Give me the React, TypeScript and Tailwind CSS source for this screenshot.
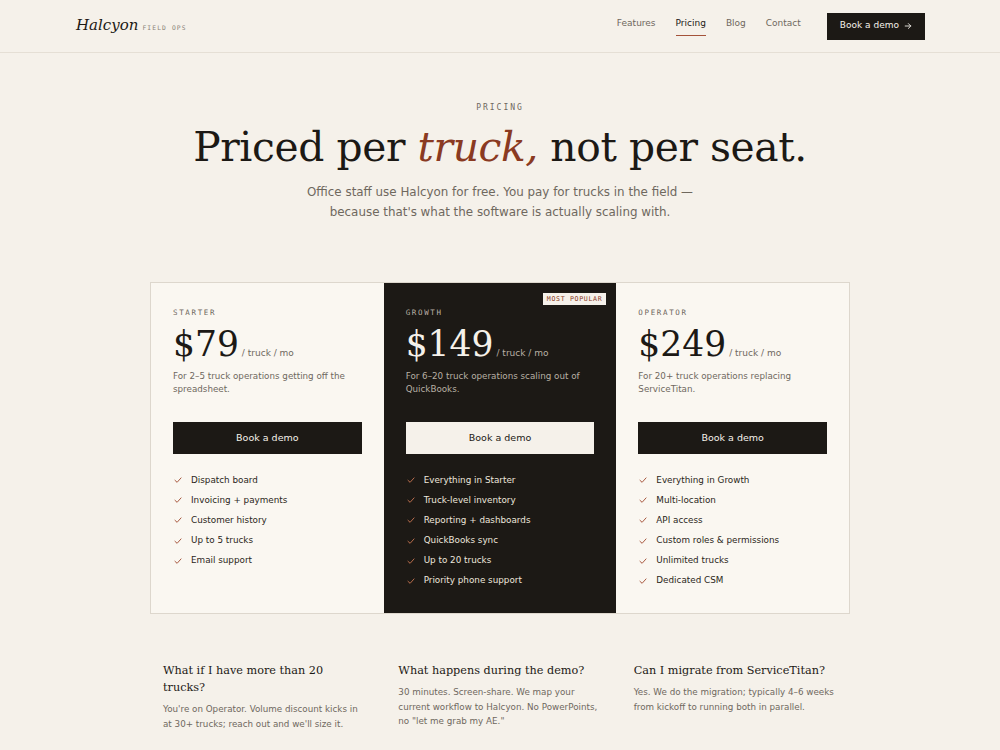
import React from 'react';

const serif = { fontFamily: '"DejaVu Serif", "Liberation Serif", serif' };
const mono = { fontFamily: '"DejaVu Sans Mono", "Liberation Mono", monospace' };
const sans = { fontFamily: '"DejaVu Sans", "Liberation Sans", sans-serif' };

type Plan = {
  name: string;
  price: string;
  blurb: string;
  features: string[];
  featured?: boolean;
};

const plans: Plan[] = [
  {
    name: 'STARTER',
    price: '$79',
    blurb: 'For 2–5 truck operations getting off the spreadsheet.',
    features: ['Dispatch board', 'Invoicing + payments', 'Customer history', 'Up to 5 trucks', 'Email support'],
  },
  {
    name: 'GROWTH',
    price: '$149',
    blurb: 'For 6–20 truck operations scaling out of QuickBooks.',
    features: [
      'Everything in Starter',
      'Truck-level inventory',
      'Reporting + dashboards',
      'QuickBooks sync',
      'Up to 20 trucks',
      'Priority phone support',
    ],
    featured: true,
  },
  {
    name: 'OPERATOR',
    price: '$249',
    blurb: 'For 20+ truck operations replacing ServiceTitan.',
    features: [
      'Everything in Growth',
      'Multi-location',
      'API access',
      'Custom roles & permissions',
      'Unlimited trucks',
      'Dedicated CSM',
    ],
  },
];

const faqs = [
  {
    q: 'What if I have more than 20 trucks?',
    a: "You're on Operator. Volume discount kicks in at 30+ trucks; reach out and we'll size it.",
  },
  {
    q: 'What happens during the demo?',
    a: '30 minutes. Screen-share. We map your current workflow to Halcyon. No PowerPoints, no "let me grab my AE."',
  },
  {
    q: 'Can I migrate from ServiceTitan?',
    a: 'Yes. We do the migration; typically 4–6 weeks from kickoff to running both in parallel.',
  },
];

function Check({ light }: { light?: boolean }) {
  return (
    <svg width="8" height="8" viewBox="0 0 10 10" fill="none" className="shrink-0">
      <path
        d="M1.2 5.4 L3.9 7.9 L8.8 2.4"
        stroke={light ? '#c0714f' : '#a4533a'}
        strokeWidth="1.2"
        strokeLinecap="round"
        strokeLinejoin="round"
      />
    </svg>
  );
}

function PlanCard({ plan }: { plan: Plan }) {
  const dark = plan.featured;
  const muted = dark ? 'text-[#b8b0a4]' : 'text-[#6f685e]';
  return (
    <div
      className={`relative px-[22px] pt-[25px] pb-[26px] ${
        dark ? 'bg-[#1c1915] text-[#f5f1ea]' : 'bg-[#faf7f1] text-[#1c1915]'
      }`}
    >
      {dark && (
        <div
          className="absolute top-[10px] right-[10px] bg-[#f5f1ea] text-[#8a3a22] text-[6.6px] tracking-[0.1em] px-[4px] py-[2px] leading-[8px]"
          style={mono}
        >
          MOST POPULAR
        </div>
      )}
      <div className={`text-[7.5px] tracking-[0.22em] leading-[10px] ${muted}`} style={mono}>
        {plan.name}
      </div>
      <div className="flex items-baseline gap-[3px] mt-[8px]">
        <span className="text-[34.5px] leading-[36px]" style={serif}>
          {plan.price}
        </span>
        <span className={`text-[9px] leading-[12px] ${muted}`} style={sans}>
          / truck / mo
        </span>
      </div>
      <p className={`mt-[7.5px] text-[8.75px] leading-[13px] h-[26px] ${muted}`} style={sans}>
        {plan.blurb}
      </p>
      <button
        className={`mt-[26.5px] w-full h-[32px] text-[9.5px] ${
          dark ? 'bg-[#f5f1ea] text-[#1c1915]' : 'bg-[#1c1915] text-[#f5f1ea]'
        }`}
        style={sans}
      >
        Book a demo
      </button>
      <ul className="mt-[19.5px] flex flex-col gap-[7.2px]">
        {plan.features.map((f) => (
          <li
            key={f}
            className={`flex items-center gap-[9px] pl-[1px] text-[8.8px] leading-[13px] ${
              dark ? 'text-[#ece6dc]' : 'text-[#2a2620]'
            }`}
            style={sans}
          >
            <Check light={dark} />
            {f}
          </li>
        ))}
      </ul>
    </div>
  );
}

export default function App() {
  return (
    <div className="min-h-[750px] bg-[#f5f1ea] text-[#1c1915]" style={sans}>
      <header className="border-b border-[#e5dfd5]">
        <div className="max-w-[850px] mx-auto h-[52px] flex items-center justify-between">
          <div className="flex items-baseline gap-[4px] pl-[1px] -translate-y-[1px]">
            <span className="italic text-[15px] text-[#1c1915]" style={serif}>
              Halcyon
            </span>
            <span className="text-[6.3px] tracking-[0.18em] text-[#8a8378]" style={mono}>
              FIELD OPS
            </span>
          </div>
          <nav className="flex items-center text-[9px]">
            <a className="text-[#6f685e] mr-[20px] pt-[1px] pb-[5px] border-b border-transparent">Features</a>
            <a className="text-[#1c1915] mr-[20px] pt-[1px] pb-[5px] border-b border-[#a4533a]">Pricing</a>
            <a className="text-[#6f685e] mr-[20px] pt-[1px] pb-[5px] border-b border-transparent">Blog</a>
            <a className="text-[#6f685e] mr-[26px] pt-[1px] pb-[5px] border-b border-transparent">Contact</a>
            <button className="h-[27px] px-[13px] bg-[#1c1915] text-[#f5f1ea] text-[9px] flex items-center gap-[5px]">
              Book a demo
              <svg width="8" height="8" viewBox="0 0 10 10" fill="none">
                <path d="M1.5 5h7M5.5 2l3 3-3 3" stroke="currentColor" strokeWidth="1.1" strokeLinecap="round" strokeLinejoin="round" />
              </svg>
            </button>
          </nav>
        </div>
      </header>

      <section className="pt-[50px] text-center">
        <div className="text-[8px] tracking-[0.25em] text-[#6f685e] leading-[10px]" style={mono}>
          PRICING
        </div>
        <h1 className="mt-[10px] text-[40.8px] leading-[48px] tracking-[-0.01em] text-[#1c1915]" style={serif}>
          Priced per <em className="text-[#8a3a22]">truck,</em> not per seat.
        </h1>
        <p className="mt-[11px] text-[11.9px] leading-[20px] text-[#6f685e]">
          Office staff use Halcyon for free. You pay for trucks in the field —
          <br />
          because that's what the software is actually scaling with.
        </p>
      </section>

      <section className="max-w-[700px] mx-auto mt-[60px] grid grid-cols-3 border border-[#ddd7cd]">
        {plans.map((p) => (
          <PlanCard key={p.name} plan={p} />
        ))}
      </section>

      <section className="max-w-[700px] mx-auto mt-[48px] grid grid-cols-3 gap-[32px] px-[13px]">
        {faqs.map((f) => (
          <div key={f.q}>
            <h3 className="text-[11.25px] leading-[17px] text-[#1c1915]" style={serif}>
              {f.q}
            </h3>
            <p className="mt-[6px] text-[8.75px] leading-[14.5px] text-[#6f685e]">{f.a}</p>
          </div>
        ))}
      </section>
    </div>
  );
}
